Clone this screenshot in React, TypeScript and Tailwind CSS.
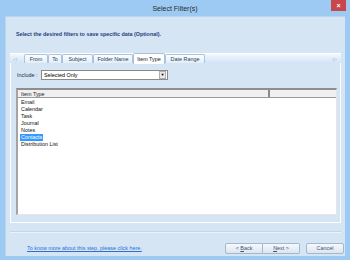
const tabs = [
  { label: 'From', w: 'w-[24px]' },
  { label: 'To', w: 'w-[14px]' },
  { label: 'Subject', w: 'w-[31px]' },
  { label: 'Folder Name', w: 'w-[40px]' },
  { label: 'Item Type', w: 'w-[32px]', active: true },
  { label: 'Date Range', w: 'w-[40px]' },
];

const items = ['Email', 'Calendar', 'Task', 'Journal', 'Notes', 'Contacts', 'Distribution List'];

export default function App() {
  return (
    <div className="w-[350px] h-[260px] bg-[#9ccaf3] flex flex-col px-[5px] pb-[4px] font-['Liberation_Sans',Arial,sans-serif] text-[5.4px] leading-[7px] text-black">
      {/* Title bar */}
      <div className="h-[16px] shrink-0 relative flex items-center justify-center">
        <span className="text-[7px] leading-none text-[#2a2a2a]">Select Filter(s)</span>
        <div className="absolute right-[-1px] top-0 w-[15px] h-[11px] bg-[#c9474b] flex items-center justify-center text-white text-[7px] leading-none font-bold">
          ×
        </div>
      </div>

      {/* Client area */}
      <div className="flex-1 bg-[#d6e5f4] flex flex-col border-l border-t border-[#b9d5f0]">
        <div className="pl-[10px] pt-[14px] font-bold text-[#1f3d7a]">
          Select the desired filters to save specific data (Optional).
        </div>

        {/* Tab strip */}
        <div className="mx-[4px] mt-[15px] h-[10px] flex items-end bg-gradient-to-b from-[#f1f7fd] to-[#d2e4f6] border-t border-white relative">
          <span className="absolute left-[3px] top-[1px] text-[5px] leading-[8px] text-[#9aaabb]">◁</span>
          <span className="absolute right-[4px] top-[1px] text-[5px] leading-[8px] text-[#9aaabb]">▷</span>
          <div className="flex items-end ml-[14px] h-full">
            {tabs.map((t) =>
              t.active ? (
                <div
                  key={t.label}
                  className={`${t.w} h-[11px] -mb-px bg-white border border-b-0 border-[#a8c0da] rounded-t-[2px] flex items-center justify-center text-[#1a1a1a] z-10`}
                >
                  {t.label}
                </div>
              ) : (
                <div
                  key={t.label}
                  className={`${t.w} h-[9px] bg-gradient-to-b from-[#fbfdff] to-[#e3eef9] border border-b-0 border-[#aac3de] rounded-t-[2px] flex items-center justify-center text-[#2c3e55]`}
                >
                  {t.label}
                </div>
              )
            )}
          </div>
        </div>

        {/* Tab panel */}
        <div className="mx-[4px] h-[160px] border border-t-0 border-white flex flex-col">
          <div className="flex items-center mt-[7px] h-[10px]">
            <span className="ml-[6px] w-[24px] text-[#1a2a44]">Include :</span>
            <div className="w-[127px] h-[10px] bg-white border border-[#8a8a8a] flex items-center justify-between">
              <span className="pl-[2px]">Selected Only</span>
              <div className="w-[7px] h-[8px] mr-px bg-[#e8e8e8] border border-[#b0b0b0] flex items-center justify-center text-[4px] leading-none">
                ▼
              </div>
            </div>
          </div>

          {/* List */}
          <div className="ml-[5px] mt-[8px] w-[321px] h-[127px] bg-white border-l-2 border-t-2 border-r border-b border-l-[#a4a4a4] border-t-[#8e8e8e] border-r-[#e6e6e6] border-b-[#e6e6e6] flex flex-col">
            <div className="h-[8px] flex bg-[#f0f0f0] border-b border-[#9a9a9a]">
              <div className="w-[252px] pl-[3px] border-r-2 border-[#8a8a8a] leading-[8px] text-[#222]">Item Type</div>
              <div className="flex-1" />
            </div>
            <div className="pt-[1px] flex flex-col items-start">
              {items.map((it) => (
                <div
                  key={it}
                  className={`h-[7px] ml-[2px] px-px leading-[7px] ${
                    it === 'Contacts' ? 'bg-[#3399ff] text-white' : 'text-[#111]'
                  }`}
                >
                  {it}
                </div>
              ))}
            </div>
          </div>
        </div>

        {/* Separator */}
        <div className="mx-[4px] mt-[8px] h-[2px] border-t border-[#c4d5e8] border-b border-b-[#eaf2fa]" />

        {/* Bottom row */}
        <div className="mt-[10px] h-[11px] flex items-center">
          <span className="ml-[21px] text-[#2a6fd6] underline">
            To know more about this step, please click here.
          </span>
          <div className="ml-auto mr-[1px] flex">
            <button className="w-[38px] h-[11px] border border-[#a3b8cf] rounded-l-[2px] bg-gradient-to-b from-[#f6f9fc] to-[#dbe5f0] text-[#3b5478] leading-none">
              &lt; <span className="underline">B</span>ack
            </button>
            <button className="w-[37px] h-[11px] border border-l-0 border-[#a3b8cf] rounded-r-[2px] bg-gradient-to-b from-[#f6f9fc] to-[#dbe5f0] text-[#3b5478] leading-none">
              <span className="underline">N</span>ext &gt;
            </button>
            <button className="ml-[6px] w-[38px] h-[11px] border border-[#a3b8cf] rounded-[2px] bg-gradient-to-b from-[#f6f9fc] to-[#dbe5f0] text-[#3b5478] leading-none">
              Cancel
            </button>
          </div>
        </div>
      </div>
    </div>
  );
}
